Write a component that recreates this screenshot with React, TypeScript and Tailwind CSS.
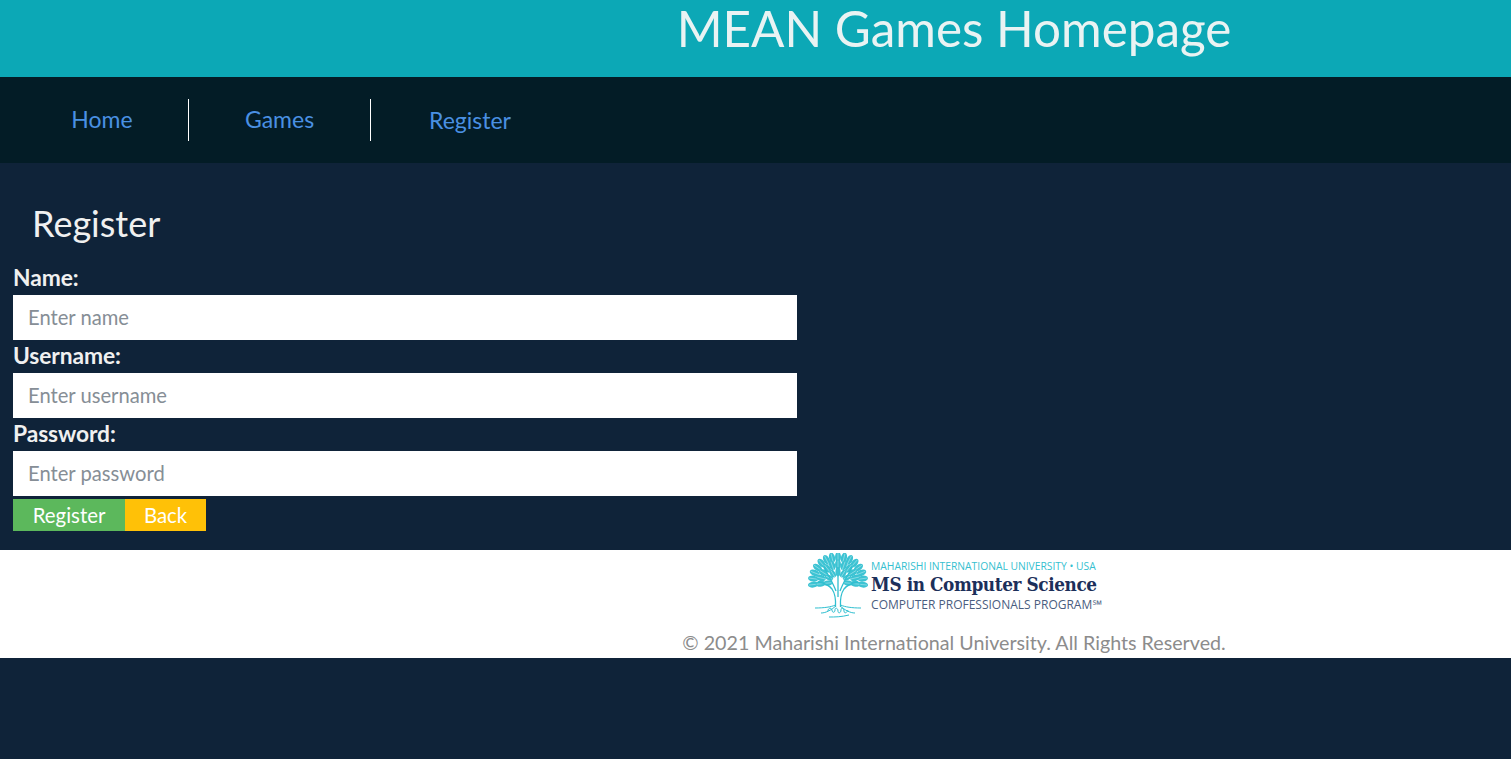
const Field = ({ label, placeholder }: { label: string; placeholder: string }) => (
  <div>
    <label className="block h-[33px] pt-[1px] text-[22.8px] leading-[28px] font-bold tracking-[-0.1px] text-[#f0f0f0]">
      {label}
    </label>
    <input
      type="text"
      placeholder={placeholder}
      className="block h-[45px] w-[784px] bg-white px-[15px] pb-[2px] text-[20.2px] text-[#495057] outline-none placeholder:text-[#868e96]"
    />
  </div>
);

// leaf rings of the tree: radius from the crown centre, leaf size, number of leaves
const rings = [
  { r: 25, rx: 5.2, ry: 3, n: 15 },
  { r: 17.5, rx: 5, ry: 3, n: 11 },
  { r: 10, rx: 4.4, ry: 2.6, n: 7 },
];

const TreeLogo = () => (
  <svg width="62" height="66" viewBox="0 0 62 66" className="shrink-0">
    <g fill="#3cc3d3">
      {rings.map((ring) =>
        Array.from({ length: ring.n }, (_, i) => {
          const deg = -186 + (192 * i) / (ring.n - 1);
          const rad = (deg * Math.PI) / 180;
          const x = 31 + ring.r * Math.cos(rad);
          const y = 29 + ring.r * Math.sin(rad);
          return (
            <g key={`${ring.r}-${i}`} transform={`rotate(${deg} ${x} ${y})`}>
              <ellipse cx={x} cy={y} rx={ring.rx} ry={ring.ry} />
              <path d={`M${x - ring.rx} ${y}H${x + ring.rx - 1}`} stroke="#ffffff" strokeWidth="0.5" opacity="0.7" />
            </g>
          );
        })
      )}
    </g>
    <path
      d="M28.5 54C29 46 28.5 41 25 36C22 32 17 30 11 29M33.5 54C33 46 33.5 41 37 36C40 32 45 30 51 29M31 44V14M29 38C26 30 22 24 17 14M33 38C36 30 40 24 45 14"
      fill="none"
      stroke="#2fbfd0"
      strokeWidth="1.3"
    />
    <path
      d="M8 55C17 55 24 54 28.5 52M54 55C45 55 38 54 33.5 52M14 60C19 60 24 57 29 53M48 60C43 60 38 57 33 53M21 58C21 55 24 54 25 57C25 60 28 60 28 57C28 54 31 55 31 58C31 61 34 60 34 57C34 54 37 55 37 58C37 61 40 60 41 57M22 64C28 64 34 64 42 62"
      fill="none"
      stroke="#2fbfd0"
      strokeWidth="1"
    />
  </svg>
);

export default function App() {
  return (
    <div className="min-h-[759px] bg-[#0f2339] font-['Lato','Open_Sans',sans-serif]">
      <header className="h-[77px] bg-[#0ca8b6] text-center">
        <h1 className="pl-[397px] text-[49.4px] leading-[56px] font-normal text-[#e9f3f3]">
          MEAN Games Homepage
        </h1>
      </header>

      <nav className="flex h-[86px] items-center bg-[#031c26] pl-[16px] text-[23px] text-[#4a90e2]">
        <a className="flex h-[42px] w-[173px] items-center justify-center border-r border-white pb-[2px]">Home</a>
        <a className="flex h-[42px] w-[182px] items-center justify-center border-r border-white pb-[2px]">Games</a>
        <a className="flex h-[42px] w-[198px] items-center justify-center">Register</a>
      </nav>

      <main className="h-[387px] px-[13px]">
        <h2 className="pt-[37px] pl-[19px] text-[36px] leading-[46px] font-normal text-[#f0f0f0]">
          Register
        </h2>
        <form className="pt-[16px]">
          <Field label="Name:" placeholder="Enter name" />
          <Field label="Username:" placeholder="Enter username" />
          <Field label="Password:" placeholder="Enter password" />
          <div className="flex pt-[3px] text-[20.4px] text-white">
            <button type="button" className="h-[32px] w-[112px] bg-[#5cb85c]">Register</button>
            <button type="button" className="h-[32px] w-[81px] bg-[#ffc107]">Back</button>
          </div>
        </form>
      </main>

      <footer className="h-[108px] bg-white pl-[397px] text-center">
        <div className="flex justify-center pt-[3px] pl-[1px]">
          <div className="flex items-start gap-[2px]">
            <TreeLogo />
            <div className="pt-[7px] text-left">
              <div className="text-[10.3px] leading-[12px] font-['Open_Sans',sans-serif] text-[#35bfd0]">
                MAHARISHI INTERNATIONAL UNIVERSITY • USA
              </div>
              <div className="font-['DejaVu_Serif_Condensed','DejaVu_Serif',serif] text-[18.8px] leading-[25px] font-bold tracking-[-0.4px] text-[#1c2f5a]">
                MS in Computer Science
              </div>
              <div className="text-[12px] leading-[15px] font-['Open_Sans',sans-serif] text-[#4a5d80]">
                COMPUTER PROFESSIONALS PROGRAM℠
              </div>
            </div>
          </div>
        </div>
        <p className="pt-[12px] text-[19.7px] leading-[24px] text-[#8c8c8c]">
          © 2021 Maharishi International University. All Rights Reserved.
        </p>
      </footer>
    </div>
  );
}
